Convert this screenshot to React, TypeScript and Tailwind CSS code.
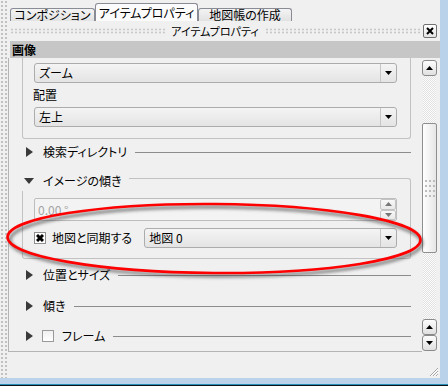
import type { ReactNode } from "react";

const uiFont = "font-['Noto_Sans_CJK_JP','Noto_Sans',sans-serif] [font-feature-settings:'palt']";

function Arrow({ dir, w = 7, h = 4, color = "#000" }: { dir: "up" | "down" | "right"; w?: number; h?: number; color?: string }) {
  const pts =
    dir === "down"
      ? `0,0 ${w},0 ${w / 2},${h}`
      : dir === "up"
        ? `0,${h} ${w},${h} ${w / 2},0`
        : `0,0 ${w},${h / 2} 0,${h}`;
  return (
    <svg width={w} height={h} className="block shrink-0">
      <polygon points={pts} fill={color} />
    </svg>
  );
}

function Combo({ text, className = "" }: { text: string; className?: string }) {
  return (
    <div className={`flex h-[20px] rounded-[3px] border border-[#acacac] bg-[linear-gradient(#f4f4f4,#e4e4e4)] ${className}`}>
      <div className="flex flex-1 items-center pl-[4px] text-[12px] leading-none">{text}</div>
      <div className="flex w-[16px] items-center justify-center border-l border-[#c6c6c6]">
        <Arrow dir="down" />
      </div>
    </div>
  );
}

function Section({ label, check, className = "" }: { label: string; check?: boolean; className?: string }) {
  return (
    <div className={`flex h-[20px] items-center pl-[17px] pr-[11px] ${className}`}>
      <Arrow dir="right" w={7} h={10} color="#3a3a3a" />
      {check ? (
        <>
          <div className="ml-[9px] h-[12px] w-[12px] border border-[#9a9a9a] bg-[linear-gradient(#f0f0f0,#ffffff)]" />
          <span className="ml-[8px] text-[12px] leading-none">{label}</span>
        </>
      ) : (
        <span className="ml-[10px] text-[12px] leading-none">{label}</span>
      )}
      <div className="ml-[8px] h-px flex-1 bg-[#8c8c8c]" />
    </div>
  );
}

function ScrollButton({ dir }: { dir: "up" | "down" }) {
  return (
    <div className="flex h-[16px] items-center justify-center rounded-[3px] border border-[#8a8a8a] bg-[linear-gradient(#fdfdfd,#e0e0e0)]">
      <Arrow dir={dir} />
    </div>
  );
}

function Track({ h }: { h: string }) {
  return <div className={`${h} mx-[1px] bg-[repeating-conic-gradient(#e2e2e2_0_25%,#fbfbfb_0_50%)] bg-[length:2px_2px]`} />;
}

function Tab({ children, active }: { children: ReactNode; active?: boolean }) {
  return active ? (
    <div className="flex h-[18px] w-[103px] items-center justify-center rounded-t-[3px] border border-b-0 border-[#898c95] bg-[#fbfbfb] text-[12px] leading-none">
      {children}
    </div>
  ) : (
    <div className="flex h-[13px] items-center justify-center rounded-t-[3px] border border-b-0 border-[#898c95] bg-[linear-gradient(#f4f4f4,#e2e2e2)] text-[12px] leading-none">
      {children}
    </div>
  );
}

export default function App() {
  return (
    <div className={`relative flex h-[386px] w-[448px] flex-col overflow-hidden bg-[#f0f0f0] text-black ${uiFont}`}>
      <div className="flex min-h-0 flex-1">
        {/* splitter grip */}
        <div className="w-[8px] bg-[radial-gradient(circle,#c2c2c2_1px,transparent_1.3px)] bg-[length:4px_4px]" />

        <div className="flex w-[432px] flex-col">
          {/* tabs */}
          <div className="flex h-[21px] items-end pl-[2px]">
            <div className="w-[85px]"><Tab>コンポジション</Tab></div>
            <Tab active>アイテムプロパティ</Tab>
            <div className="w-[94px]"><Tab>地図帳の作成</Tab></div>
          </div>

          {/* dock title */}
          <div className="flex h-[20px] items-center pl-[2px] pr-[3px]">
            <div className="h-[6px] flex-1 bg-[radial-gradient(circle,#c8c8c8_0.9px,transparent_1.2px)] bg-[length:4px_3px]" />
            <span className="mx-[6px] text-[11px] leading-none">アイテムプロパティ</span>
            <div className="h-[6px] flex-1 bg-[radial-gradient(circle,#c8c8c8_0.9px,transparent_1.2px)] bg-[length:4px_3px]" />
            <div className="ml-[3px] flex h-[14px] w-[14px] items-center justify-center rounded-[2px] border border-[#707070] bg-[linear-gradient(#ffffff,#e4e4e4)]">
              <svg width="8" height="8" className="block">
                <path d="M1 1 L7 7 M7 1 L1 7" stroke="#000" strokeWidth="2" />
              </svg>
            </div>
          </div>

          {/* header */}
          <div className="ml-[2px] flex h-[17px] items-center bg-[#c6c6c6] pl-[2px] text-[12px] font-bold leading-none">画像</div>

          {/* scroll area */}
          <div className="flex h-[294px]">
            <div className="flex w-[414px] flex-col overflow-hidden border-b border-l border-[#b4b4b4]">
              {/* tail of image group */}
              <div className="ml-[13px] mr-[11px] rounded-b-[3px] border-x border-b border-[#c2c2c2] pb-[11px] pt-[5px]">
                <Combo text="ズーム" className="ml-[11px] mr-[13px]" />
                <div className="flex h-[24px] items-center pl-[10px] text-[12px] leading-none">配置</div>
                <Combo text="左上" className="ml-[11px] mr-[13px]" />
              </div>

              <Section label="検索ディレクトリ" className="mt-[3px]" />

              {/* image rotation group */}
              <div className="mt-[9px] flex h-[20px] pl-[15px]">
                <div className="flex items-center">
                  <Arrow dir="down" w={10} h={6} color="#3a3a3a" />
                  <span className="ml-[9px] text-[12px] leading-none">イメージの傾き</span>
                </div>
                <div className="ml-[8px] mr-[11px] mt-[7px] flex-1 rounded-tr-[3px] border-r border-t border-[#c2c2c2]" />
              </div>
              <div className="ml-[13px] mr-[11px] rounded-b-[3px] border-x border-b border-[#c2c2c2] pb-[10px] pt-[7px]">
                <div className="ml-[11px] mr-[13px] flex h-[23px] rounded-[2px] border border-[#bdbdbd] bg-[#f3f3f3]">
                  <div className="flex flex-1 items-center pl-[3px] text-[12px] leading-none text-[#a3a3a3]">0.00 °</div>
                  <div className="flex w-[16px] flex-col">
                    <div className="flex flex-1 items-center justify-center rounded-[2px] border border-[#c4c4c4] bg-[linear-gradient(#f8f8f8,#e8e8e8)]">
                      <Arrow dir="up" color="#777" />
                    </div>
                    <div className="flex flex-1 items-center justify-center rounded-[2px] border border-[#c4c4c4] bg-[linear-gradient(#f8f8f8,#e8e8e8)]">
                      <Arrow dir="down" color="#777" />
                    </div>
                  </div>
                </div>
                <div className="mt-[7px] flex h-[20px] items-center">
                  <div className="ml-[11px] flex h-[12px] w-[12px] items-center justify-center border border-[#8e8f8f] bg-white">
                    <svg width="8" height="8" className="block">
                      <path d="M1 1 L7 7 M7 1 L1 7" stroke="#000" strokeWidth="3" />
                    </svg>
                  </div>
                  <span className="ml-[6px] text-[12px] leading-none">地図と同期する</span>
                  <Combo text="地図 0" className="ml-[12px] mr-[13px] flex-1" />
                </div>
              </div>

              <Section label="位置とサイズ" className="mt-[6px]" />
              <Section label="傾き" className="mt-[11px]" />
              <Section label="フレーム" check className="mt-[10px]" />
            </div>

            {/* scrollbar */}
            <div className="flex w-[15px] flex-col pt-[2px]">
              <ScrollButton dir="up" />
              <Track h="h-[47px]" />
              <div className="flex h-[130px] items-center justify-center rounded-[2px] border border-[#8f8f8f] bg-[linear-gradient(90deg,#ffffff,#e6e6e6)]">
                <div className="grid grid-cols-3 gap-x-[2px] gap-y-[3px]">
                  {Array.from({ length: 12 }).map((_, i) => (
                    <div key={i} className="h-[2px] w-[2px] bg-[#bcbcbc]" />
                  ))}
                </div>
              </div>
              <Track h="h-[66px]" />
              <ScrollButton dir="up" />
              <ScrollButton dir="down" />
            </div>
          </div>

          {/* bottom space with size grip */}
          <div className="flex flex-1 items-end justify-end pb-[1px] pr-[1px]">
            <svg width="11" height="11" className="block">
              <path d="M10 2 L2 10 M10 5 L5 10 M10 8 L8 10" stroke="#a6a6a6" strokeWidth="1" />
              <path d="M10 3 L3 10 M10 6 L6 10 M10 9 L9 10" stroke="#ffffff" strokeWidth="1" />
            </svg>
          </div>
        </div>

        <div className="w-[8px] bg-[#bad2ea]" />
      </div>
      <div className="h-[6px] bg-[#bad2ea]" />
      <div className="h-[1px] bg-[#2a8fb8]" />
      <div className="h-[1px] bg-[#0d1418]" />

      {/* red annotation ellipse */}
      <svg width="448" height="386" className="pointer-events-none absolute left-0 top-0">
        <defs>
          <filter id="blur" x="-10%" y="-50%" width="120%" height="200%">
            <feGaussianBlur stdDeviation="1.6" />
          </filter>
        </defs>
        <g transform="rotate(0.4 214 238)">
          <ellipse cx="216" cy="241.5" rx="206" ry="34.5" fill="none" stroke="#3c3c3c" strokeOpacity="0.55" strokeWidth="3.5" filter="url(#blur)" />
          <ellipse cx="214" cy="238.5" rx="206.5" ry="34.5" fill="none" stroke="#ff0000" strokeWidth="2.6" />
        </g>
      </svg>
    </div>
  );
}
